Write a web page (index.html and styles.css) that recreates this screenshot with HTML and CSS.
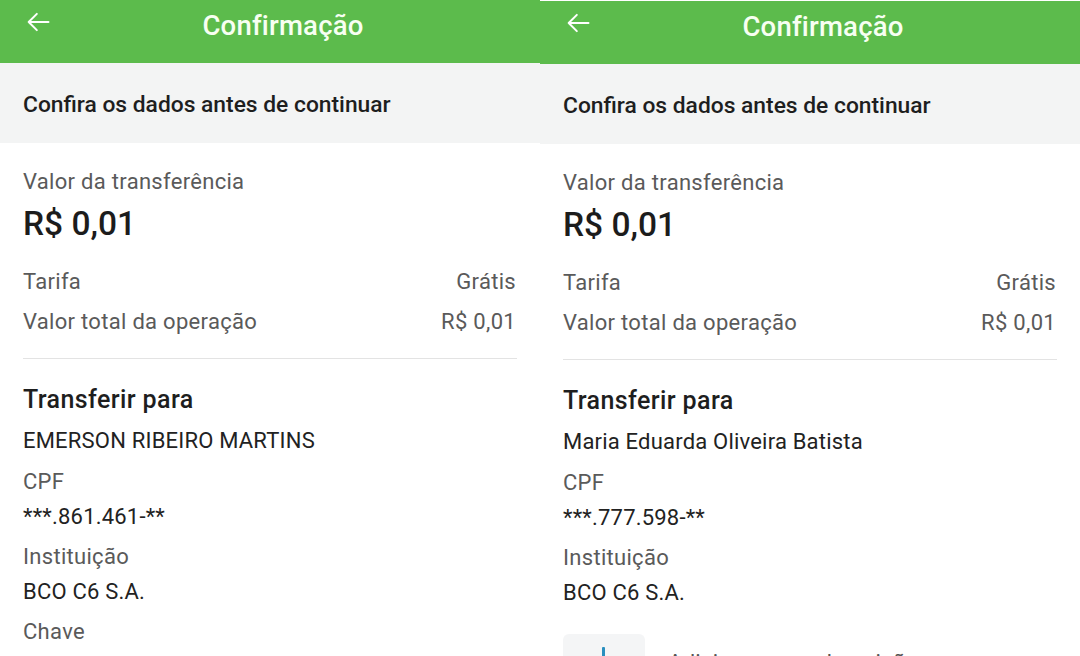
FILE: index.html
```html
<!DOCTYPE html>
<html lang="pt-BR">
<head>
<meta charset="utf-8">
<title>Confirmação</title>
<link rel="stylesheet" href="styles.css">
</head>
<body>
<div class="screens">
  <section class="phone">
    <header class="topbar">
      <svg class="back" viewBox="0 0 24 24" width="28" height="28"><path d="M21 12H4M11 5l-7 7 7 7" fill="none" stroke="#fff" stroke-width="1.7" stroke-linecap="round" stroke-linejoin="round"/></svg>
      <h1 class="title">Confirmação</h1>
    </header>
    <div class="notice">Confira os dados antes de continuar</div>
    <div class="content">
      <div class="label">Valor da transferência</div>
      <div class="amount">R$ 0,01</div>
      <div class="row first"><span>Tarifa</span><span>Grátis</span></div>
      <div class="row"><span>Valor total da operação</span><span>R$ 0,01</span></div>
      <hr class="divider">
      <h2 class="section">Transferir para</h2>
      <div class="value name">EMERSON RIBEIRO MARTINS</div>
      <div class="field"><div class="label">CPF</div><div class="value">***.861.461-**</div></div>
      <div class="field"><div class="label">Instituição</div><div class="value">BCO C6 S.A.</div></div>
      <div class="field"><div class="label">Chave</div></div>
    </div>
  </section>
  <section class="phone second">
    <header class="topbar">
      <svg class="back" viewBox="0 0 24 24" width="28" height="28"><path d="M21 12H4M11 5l-7 7 7 7" fill="none" stroke="#fff" stroke-width="1.7" stroke-linecap="round" stroke-linejoin="round"/></svg>
      <h1 class="title">Confirmação</h1>
    </header>
    <div class="notice">Confira os dados antes de continuar</div>
    <div class="content">
      <div class="label">Valor da transferência</div>
      <div class="amount">R$ 0,01</div>
      <div class="row first"><span>Tarifa</span><span>Grátis</span></div>
      <div class="row"><span>Valor total da operação</span><span>R$ 0,01</span></div>
      <hr class="divider">
      <h2 class="section">Transferir para</h2>
      <div class="value name">Maria Eduarda Oliveira Batista</div>
      <div class="field"><div class="label">CPF</div><div class="value">***.777.598-**</div></div>
      <div class="field"><div class="label">Instituição</div><div class="value">BCO C6 S.A.</div></div>
      <div class="attach">
        <div class="attach-icon"><span class="bar"></span></div>
        <div class="attach-text">Adicionar uma descrição</div>
      </div>
    </div>
  </section>
</div>
</body>
</html>
```

FILE: styles.css
```css
* { box-sizing: border-box; }
html, body { margin: 0; padding: 0; }
body {
  width: 1080px;
  height: 656px;
  overflow: hidden;
  background: #fff;
  font-family: Roboto, "Noto Sans", "Liberation Sans", sans-serif;
  color: #212121;
}
.screens { display: flex; }
.phone { width: 540px; height: 656px; overflow: hidden; background: #fff; }
.phone.second { padding-top: 1px; }
.topbar {
  height: 63px;
  background: #5cbb4c;
  position: relative;
}
.back { position: absolute; left: 24px; top: 8px; }
.title {
  margin: 0;
  text-align: center;
  font-size: 27.5px;
  font-weight: 500;
  color: #f7fff2;
  line-height: 32px;
  padding-top: 10px;
  padding-left: 26px;
  letter-spacing: 0.2px;
}
.notice {
  height: 80px;
  background: #f3f4f4;
  display: flex;
  align-items: center;
  padding: 3px 23px 0;
  font-size: 22.8px;
  font-weight: 500;
  color: #1e1e1e;
}
.content { padding: 26px 23px 0; }
.label { font-size: 22px; line-height: 26px; color: #5a5a5a; letter-spacing: 0.3px; }
.amount { font-size: 33.5px; font-weight: 500; line-height: 40px; margin-top: 9px; color: #1c1c1c; }
.row {
  display: flex;
  justify-content: space-between;
  font-size: 22px;
  line-height: 26px;
  color: #5a5a5a;
  letter-spacing: 0.3px;
  margin-top: 14px;
  padding-right: 1px;
}
.row.first { margin-top: 25px; }
.divider { border: 0; border-top: 1px solid #e3e3e3; margin: 23px 0 0; }
.section { margin: 26px 0 0; font-size: 25px; font-weight: 500; line-height: 30px; color: #1e1e1e; letter-spacing: 0.4px; }
.value { font-size: 22px; line-height: 26px; color: #222; margin-top: 9px; letter-spacing: 0.2px; }
.name { margin-top: 13px; }
.field { margin-top: 15px; }
.field + .field { margin-top: 14px; }
.attach { display: flex; gap: 23px; margin-top: 28px; }
.attach-icon {
  width: 82px;
  height: 60px;
  background: #f4f5f6;
  border-radius: 6px;
  position: relative;
  flex: none;
}
.attach-icon .bar {
  position: absolute;
  left: 39px;
  top: 13px;
  width: 3px;
  height: 30px;
  background: #2a8fbf;
  border-radius: 1px;
}
.attach-text { font-size: 22px; line-height: 26px; color: #555; padding-top: 16px; letter-spacing: 0.3px; }
```
